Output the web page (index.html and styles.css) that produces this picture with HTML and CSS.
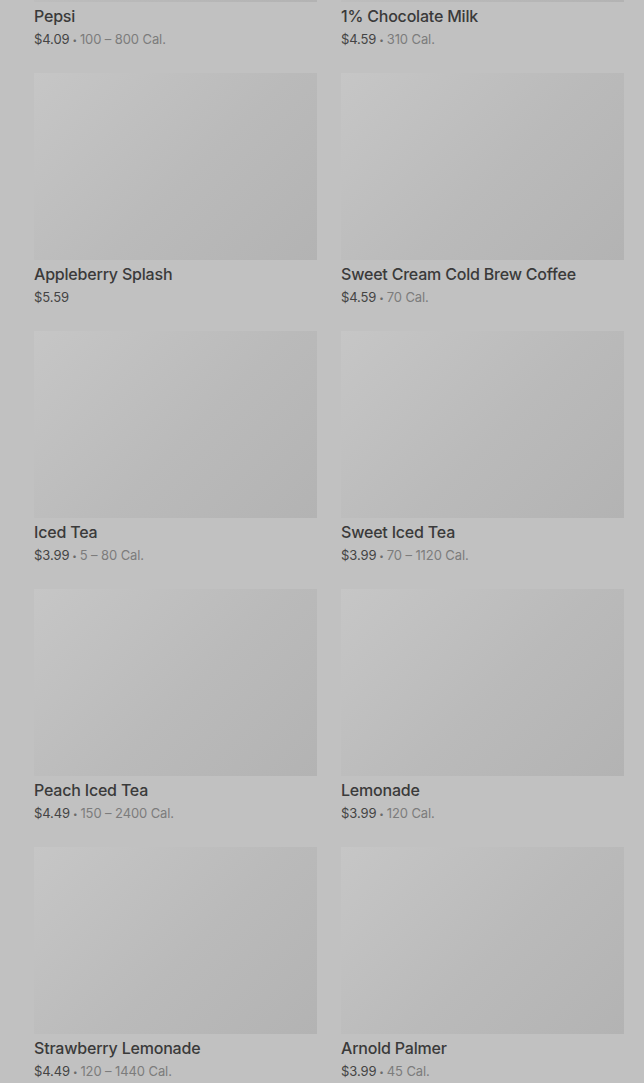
FILE: index.html
```html
<!DOCTYPE html>
<html lang="en">
<head>
    <meta charset="UTF-8">
    <meta name="viewport" content="width=device-width, initial-scale=1.0">
    <title>Drinks</title>
    <link rel="stylesheet" href="styles.css">
</head>
<body>
    <div class="grid">
        <div class="item">
            <div class="photo"></div>
            <p class="name">Pepsi</p>
            <p class="meta">$4.09<span class="dot">•</span><span class="cal">100 – 800 Cal.</span></p>
        </div>
        <div class="item">
            <div class="photo"></div>
            <p class="name">1% Chocolate Milk</p>
            <p class="meta">$4.59<span class="dot">•</span><span class="cal">310 Cal.</span></p>
        </div>
        <div class="item">
            <div class="photo"></div>
            <p class="name">Appleberry Splash</p>
            <p class="meta">$5.59</p>
        </div>
        <div class="item">
            <div class="photo"></div>
            <p class="name">Sweet Cream Cold Brew Coffee</p>
            <p class="meta">$4.59<span class="dot">•</span><span class="cal">70 Cal.</span></p>
        </div>
        <div class="item">
            <div class="photo"></div>
            <p class="name">Iced Tea</p>
            <p class="meta">$3.99<span class="dot">•</span><span class="cal">5 – 80 Cal.</span></p>
        </div>
        <div class="item">
            <div class="photo"></div>
            <p class="name">Sweet Iced Tea</p>
            <p class="meta">$3.99<span class="dot">•</span><span class="cal">70 – 1120 Cal.</span></p>
        </div>
        <div class="item">
            <div class="photo"></div>
            <p class="name">Peach Iced Tea</p>
            <p class="meta">$4.49<span class="dot">•</span><span class="cal">150 – 2400 Cal.</span></p>
        </div>
        <div class="item">
            <div class="photo"></div>
            <p class="name">Lemonade</p>
            <p class="meta">$3.99<span class="dot">•</span><span class="cal">120 Cal.</span></p>
        </div>
        <div class="item">
            <div class="photo"></div>
            <p class="name">Strawberry Lemonade</p>
            <p class="meta">$4.49<span class="dot">•</span><span class="cal">120 – 1440 Cal.</span></p>
        </div>
        <div class="item">
            <div class="photo"></div>
            <p class="name">Arnold Palmer</p>
            <p class="meta">$3.99<span class="dot">•</span><span class="cal">45 Cal.</span></p>
        </div>
    </div>
</body>
</html>
```

FILE: styles.css
```css
body {
    margin: 0;
    font-family: Inter, "Noto Sans", sans-serif;
    background-color: #c1c1c1;
    overflow: hidden;
}
.grid {
    display: grid;
    grid-template-columns: 283px 283px;
    column-gap: 24px;
    row-gap: 24px;
    padding: 0 20px 0 34px;
    margin-top: -185px;
}
.photo {
    height: 187px;
    background: linear-gradient(135deg, #c6c6c6 0%, #bababa 55%, #b3b3b3 100%);
}
.name {
    margin: 4px 0 0;
    font-size: 16px;
    line-height: 20px;
    font-weight: 500;
    letter-spacing: -0.2px;
    color: #3a3a3a;
}
.meta {
    margin: 3px 0 0;
    font-size: 13px;
    line-height: 20px;
    letter-spacing: -0.1px;
    color: #444444;
}
.dot {
    margin: 0 3px;
    font-size: 8px;
    line-height: 0;
    vertical-align: 1px;
    color: #6a6a6a;
}
.cal {
    color: #7c7c7c;
}
```
